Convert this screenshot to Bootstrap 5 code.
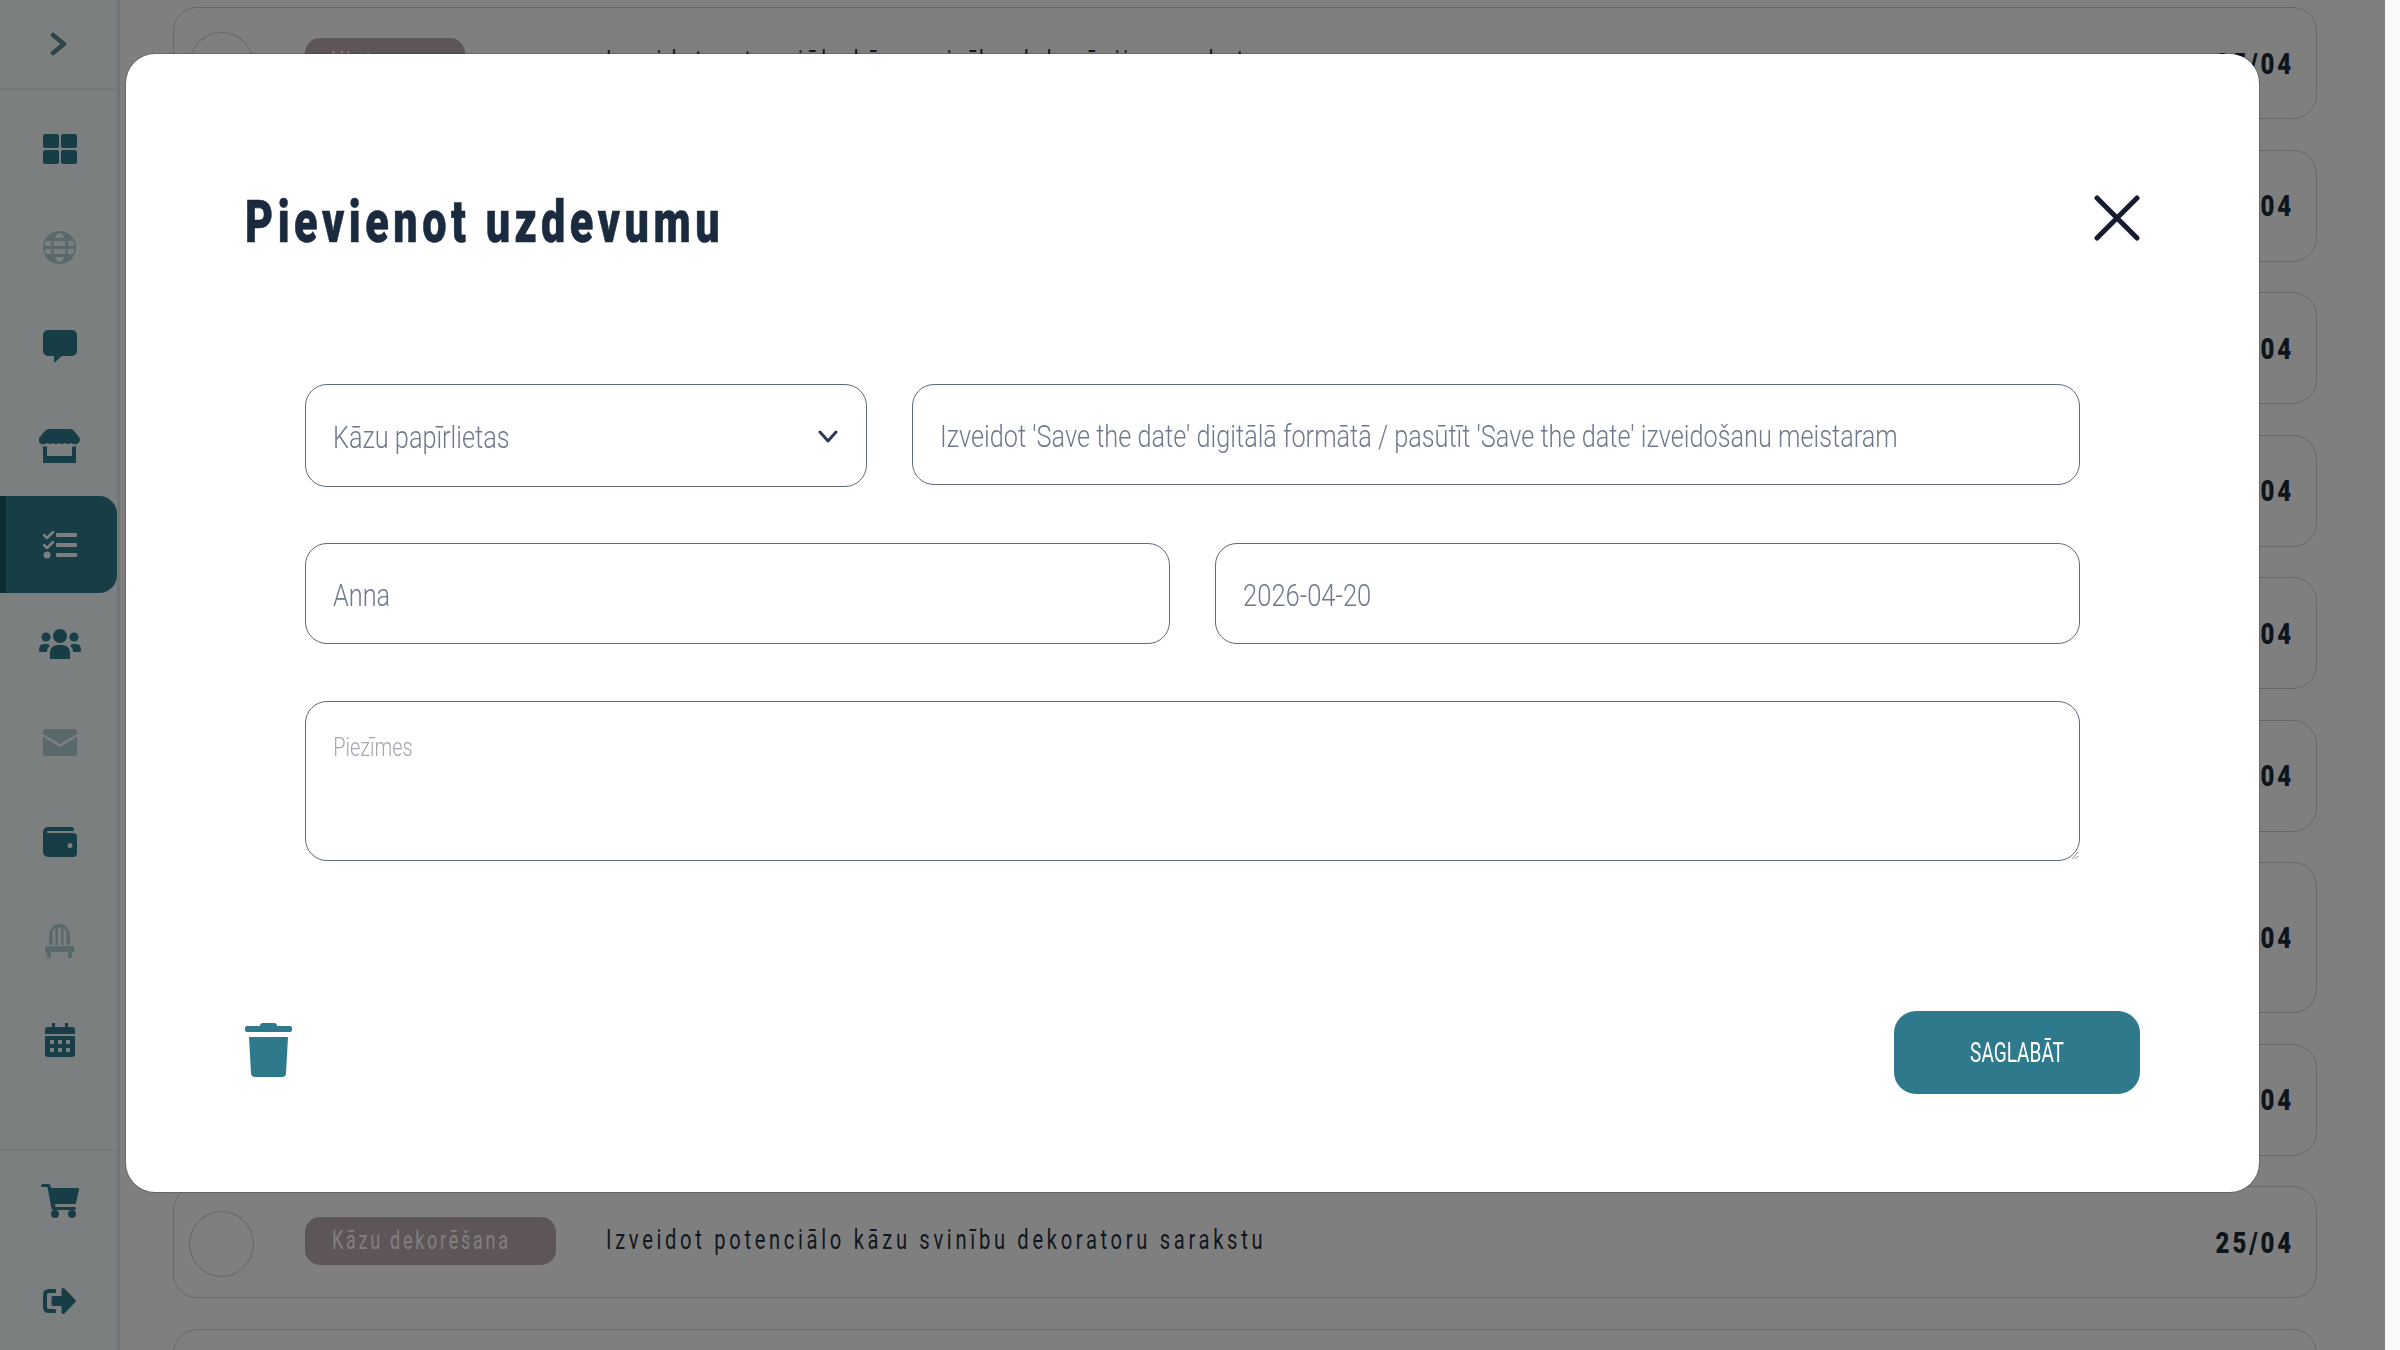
<!DOCTYPE html>
<html lang="lv">
<head>
<meta charset="utf-8">
<title>Pievienot uzdevumu</title>
<link href="https://cdn.jsdelivr.net/npm/bootstrap@5.3.0/dist/css/bootstrap.min.css" rel="stylesheet">
<style>
html,body{height:1350px;overflow:hidden;background:#fafafa}
body{font-family:Roboto,sans-serif;color:#1f3040}
.app-shell{width:2385px;height:1350px;background:#fff}
.side-rail{width:120px;background:#f7ffff;border-right:3px solid #dbeeee;height:1350px}
.rail-top{height:90px;border-bottom:2px solid #e4f2f2}
.rail-item{height:99px;color:#2e7a8c;padding-left:2px}
.rail-list{padding-top:9px}
.rail-item.faded svg{opacity:.35}
.rail-item.current{background:#2e7a8c;color:#f7ffff;border-radius:0 18px 18px 0;border-left:6px solid #1c5866;padding:0 4px 0 0;height:97px;margin:1px 0}
.rail-foot{border-top:2px solid #e4f2f2;height:201px}
.rail-foot .rail-item{height:100px}
.task-area{padding:7px 68px 0 53px;gap:30.5px}
.task-row{height:112px;border:1px solid #d0d0d0;border-radius:24px;padding:0 22px 0 15px;flex:none}
.task-row.tall{height:151px}
.tick-ring{width:65px;height:66px;border:1px solid #d0d0d0;border-radius:50%;flex:none;margin-top:3px}
.chip-slot{width:251px;margin-left:51px;flex:none;margin-top:-2px}
.cat-chip{height:48px;border-radius:15px;background:#bcaab0;color:#fff;font-size:25px;letter-spacing:3.8px;padding:0 27px;line-height:48px;width:160px;overflow:hidden;white-space:nowrap}
.cat-chip.wide{width:251px}
.squeezed{display:inline-block;transform:scaleX(.72);transform-origin:left center;white-space:nowrap}
.task-name{font-size:28px;letter-spacing:5.1px;margin-left:50px;margin-top:-5px}
.task-date{font-size:30px;font-weight:900;letter-spacing:3.6px;color:#1a2a3a;transform:scaleX(.8);transform-origin:right center;flex:none}
.scrim{position:fixed;top:0;left:0;width:2385px;height:1350px;background:#000;opacity:.5;z-index:1050}
.task-dialog{max-width:none;width:2135px;margin:53px 0 0 125px}
.task-sheet{height:1140px;border-radius:30px}
.task-head{padding:138px 119px 0;align-items:center}
.task-title{font-size:60px;line-height:60px;font-weight:900;letter-spacing:6.3px;color:#1b2b3f;-webkit-text-stroke:.6px #1b2b3f}
.close-mark{margin-top:-8px}
.task-body{padding:132px 179px 0}
.field-row{gap:45.5px;margin-bottom:56px}
.field-row.second{margin-bottom:57px;gap:45px}
.field-box{border:1px solid #5f687c;border-radius:22px;height:101px;padding:2px 27px 0;overflow:hidden}
.field-box.pick{width:561.5px;height:103px;flex:none;padding-right:28px}
.field-box input,.field-box select{border:0;padding:0;background:none;box-shadow:none;color:#6f788c;font-size:32px;font-weight:300;flex:none;transform:scaleX(.79);transform-origin:left center}
.field-box input{width:127%}
.field-box select{width:440px}
.field-box.day input{transform:scaleX(.8)}
.field-box input:focus,.field-box select:focus{background:none;color:#6f788c;box-shadow:none}
.field-box.notes{height:160px;padding:0;overflow:visible}
.field-box textarea{border:0;height:100%;width:125%;max-width:none;padding:27px 34px 0;color:#7a8296;font-size:25px;font-weight:300;background:none;box-shadow:none;transform:scaleX(.8);transform-origin:left top}
.field-box textarea::placeholder{color:#a4a6b0}
.task-foot{padding:150px 119px 97px;border:0}
.task-foot>*{margin:0}
.trash-btn{margin-bottom:5px!important}
.save-btn{width:246px;height:83px;border-radius:22px;background:#2e7a8c;border:0;color:#fff;font-size:28px;padding:0}
.save-btn span{display:inline-block;transform:scaleX(.68)}
.icon-plain{background:none;border:0;padding:0;line-height:0}
</style>
</head>
<body>
<div class="app-shell d-flex">
  <nav class="side-rail d-flex flex-column flex-shrink-0">
    <div class="rail-top d-flex align-items-center justify-content-center">
      <svg width="20" height="24" viewBox="0 0 20 24" fill="none" stroke="#5f8a94" stroke-width="4.500" stroke-linecap="round" stroke-linejoin="round"><path d="M4 3l11 9-11 9"/></svg>
    </div>
    <div class="rail-list flex-grow-1">
      <a class="rail-item d-flex align-items-center justify-content-center">
        <svg width="34" height="30" viewBox="0 0 34 30" fill="currentColor"><rect width="16" height="14" rx="2"/><rect x="18" width="16" height="14" rx="2"/><rect y="16" width="16" height="14" rx="2"/><rect x="18" y="16" width="16" height="14" rx="2"/></svg>
      </a>
      <a class="rail-item faded d-flex align-items-center justify-content-center">
        <svg width="33" height="33" viewBox="0 0 33 33" fill="currentColor"><path fill-rule="evenodd" d="M16.500 0A16.500 16.500 0 1 0 16.500 33 16.500 16.500 0 1 0 16.500 0ZM11 10h11l.5 5h-12ZM10.500 18h12l-.5 5H11ZM1.500 15q.300-2.800 1.500-5h5.500l-.5 5ZM25 10h5q1.200 2.200 1.500 5H25.500ZM3 23q-1.200-2.200-1.500-5H8l.5 5ZM25 18h6.500q-.300 2.800-1.500 5h-5.500ZM12 7q1.500-5 4.500-5T21 7ZM12 26h9q-1.500 5-4.500 5T12 26Z"/></svg>
      </a>
      <a class="rail-item d-flex align-items-center justify-content-center">
        <svg width="34" height="34" viewBox="0 0 34 34" fill="currentColor"><path d="M5 0h24a5 5 0 0 1 5 5v16a5 5 0 0 1-5 5H19l-8 7v-7H5a5 5 0 0 1-5-5V5a5 5 0 0 1 5-5z"/></svg>
      </a>
      <a class="rail-item d-flex align-items-center justify-content-center">
        <svg width="41" height="34" viewBox="0 0 41 34" fill="currentColor"><path d="M10 0h21q3 0 5 3l4 5a4.500 4.500 0 0 1-2 7q-3 1-6-1-3 2-6 0-3 2-6 0-3 2-6 0-3 2-6 0-3 2-6 1A4.500 4.500 0 0 1 1 8l4-5q2-3 5-3z"/><path fill-rule="evenodd" d="M4 17q2 .8 4 .5V27h25v-9.500q2 .3 4-.5v17H4z"/></svg>
      </a>
      <a class="rail-item current d-flex align-items-center justify-content-center">
        <svg width="34" height="28" viewBox="0 0 34 28" fill="currentColor"><rect x="13" y="2" width="21" height="4" rx="1"/><rect x="13" y="12" width="21" height="4" rx="1"/><rect x="13" y="22" width="21" height="4" rx="1"/><circle cx="4" cy="24" r="3.500"/><path d="M1 4l3 3 6-6M1 14l3 3 6-6" fill="none" stroke="currentColor" stroke-width="2.500" stroke-linecap="round" stroke-linejoin="round"/></svg>
      </a>
      <a class="rail-item d-flex align-items-center justify-content-center">
        <svg width="42" height="30" viewBox="0 0 42 30" fill="currentColor"><circle cx="21" cy="7" r="7"/><circle cx="7" cy="8" r="4.500"/><circle cx="35" cy="8" r="4.500"/><path d="M11 30v-6q0-7 7-8h6q7 1 7 8v6zM0 21q0-6 5-6h4q1 .8 2 2-3 2-3 6H1.500Q0 23 0 21zM42 21q0-6-5-6h-4q-1 .8-2 2 3 2 3 6h6.500q1.500 0 1.500-2z"/></svg>
      </a>
      <a class="rail-item faded d-flex align-items-center justify-content-center">
        <svg width="34" height="27" viewBox="0 0 34 27" fill="currentColor"><path d="M3 0h28a3 3 0 0 1 3 3v2L17 15 0 5V3a3 3 0 0 1 3-3zM0 8l17 10L34 8v16a3 3 0 0 1-3 3H3a3 3 0 0 1-3-3z"/></svg>
      </a>
      <a class="rail-item d-flex align-items-center justify-content-center">
        <svg width="34" height="30" viewBox="0 0 34 30" fill="currentColor"><path fill-rule="evenodd" d="M5 0h24q2 0 2 4H5Q4 4 4 5t1 1h25a4 4 0 0 1 4 4v16a4 4 0 0 1-4 4H5a5 5 0 0 1-5-5V5a5 5 0 0 1 5-5zM27 16a2.500 2.500 0 1 0 0 5 2.500 2.500 0 1 0 0-5z"/></svg>
      </a>
      <a class="rail-item faded d-flex align-items-center justify-content-center">
        <svg width="29" height="34" viewBox="0 0 29 34" fill="currentColor"><path fill-rule="evenodd" d="M4 21V13C4 5 9 0 14.500 0S25 5 25 13v8h-3.500V6.500Q20 5 18.500 4.300V21h-2.500V3.400h-3V21h-2.500V4.300Q9 5 7.500 6.500V21zM1.500 22h26a1.500 1.500 0 0 1 1.500 1.500V27a1 1 0 0 1-2 1v6h-4v-6H6v6H2v-6a1 1 0 0 1-2-1v-3.500A1.500 1.500 0 0 1 1.500 22z"/></svg>
      </a>
      <a class="rail-item d-flex align-items-center justify-content-center">
        <svg width="30" height="34" viewBox="0 0 30 34" fill="currentColor"><path fill-rule="evenodd" d="M7 0h3v4h10V0h3v4h4a3 3 0 0 1 3 3v4H0V7a3 3 0 0 1 3-3h4zM0 13h30v18a3 3 0 0 1-3 3H3a3 3 0 0 1-3-3zM5 17v4h4v-4zM13 17v4h4v-4zM21 17v4h4v-4zM5 25v4h4v-4zM13 25v4h4v-4zM21 25v4h4v-4z"/></svg>
      </a>
    </div>
    <div class="rail-foot">
      <a class="rail-item d-flex align-items-center justify-content-center">
        <svg width="38" height="34" viewBox="0 0 38 34" fill="currentColor"><path d="M1.500 0h6A2 2 0 0 1 9.500 1.500L10 4h26.500a1.500 1.500 0 0 1 1.500 1.800l-3 13a1.500 1.500 0 0 1-1.500 1.200H14l.5 3h19a1.500 1.500 0 0 1 0 3H12a1.500 1.500 0 0 1-1.500-1.200L6.500 3H1.500a1.500 1.500 0 0 1 0-3z"/><circle cx="14" cy="30" r="4"/><circle cx="31" cy="30" r="4"/></svg>
      </a>
      <a class="rail-item d-flex align-items-center justify-content-center">
        <svg width="33" height="26" viewBox="0 0 33 26" fill="currentColor"><path d="M6 1h6a1 1 0 0 1 1 1v2a1 1 0 0 1-1 1H6Q4 5 4 7v12q0 2 2 2h6a1 1 0 0 1 1 1v2a1 1 0 0 1-1 1H6q-6 0-6-6V7q0-6 6-6z"/><path d="M20 0q1 0 2 1l10.500 11a1.500 1.500 0 0 1 0 2L22 25q-1 1-2 1-1.500-.2-1.500-2v-6H10a1.500 1.500 0 0 1-1.500-1.500v-7A1.500 1.500 0 0 1 10 8h8.500V2q0-1.800 1.500-2z"/></svg>
      </a>
    </div>
  </nav>
  <main class="task-area flex-grow-1 d-flex flex-column overflow-hidden">
    <div class="task-row d-flex align-items-center"><span class="tick-ring"></span><div class="chip-slot"><div class="cat-chip"><span class="squeezed">Vieta</span></div></div><span class="task-name flex-grow-1"><span class="squeezed">Izveidot potenciālo kāzu svinību dekorāciju sarakstu</span></span><span class="task-date">25/04</span></div>
    <div class="task-row d-flex align-items-center"><span class="tick-ring"></span><div class="chip-slot"><div class="cat-chip"><span class="squeezed">Vieta</span></div></div><span class="task-name flex-grow-1"><span class="squeezed">Apmeklēt potenciālās vietas</span></span><span class="task-date">25/04</span></div>
    <div class="task-row d-flex align-items-center"><span class="tick-ring"></span><div class="chip-slot"><div class="cat-chip"><span class="squeezed">Vieta</span></div></div><span class="task-name flex-grow-1"><span class="squeezed">Rezervēt kāzu vietu</span></span><span class="task-date">25/04</span></div>
    <div class="task-row d-flex align-items-center"><span class="tick-ring"></span><div class="chip-slot"><div class="cat-chip"><span class="squeezed">Ēdiens</span></div></div><span class="task-name flex-grow-1"><span class="squeezed">Izvēlēties ēdināšanas pakalpojumu</span></span><span class="task-date">25/04</span></div>
    <div class="task-row d-flex align-items-center"><span class="tick-ring"></span><div class="chip-slot"><div class="cat-chip"><span class="squeezed">Ēdiens</span></div></div><span class="task-name flex-grow-1"><span class="squeezed">Saskaņot ēdienkarti</span></span><span class="task-date">25/04</span></div>
    <div class="task-row d-flex align-items-center"><span class="tick-ring"></span><div class="chip-slot"><div class="cat-chip"><span class="squeezed">Foto</span></div></div><span class="task-name flex-grow-1"><span class="squeezed">Izvēlēties fotogrāfu</span></span><span class="task-date">25/04</span></div>
    <div class="task-row tall d-flex align-items-center"><span class="tick-ring"></span><div class="chip-slot"><div class="cat-chip wide"><span class="squeezed">Kāzu papīrlietas</span></div></div><span class="task-name flex-grow-1"><span class="squeezed">Izveidot 'Save the date' digitālā formātā</span></span><span class="task-date">25/04</span></div>
    <div class="task-row d-flex align-items-center"><span class="tick-ring"></span><div class="chip-slot"><div class="cat-chip"><span class="squeezed">Mūzika</span></div></div><span class="task-name flex-grow-1"><span class="squeezed">Izvēlēties mūziķus</span></span><span class="task-date">25/04</span></div>
    <div class="task-row d-flex align-items-center"><span class="tick-ring"></span><div class="chip-slot"><div class="cat-chip wide"><span class="squeezed">Kāzu dekorēšana</span></div></div><span class="task-name flex-grow-1"><span class="squeezed">Izveidot potenciālo kāzu svinību dekoratoru sarakstu</span></span><span class="task-date">25/04</span></div>
    <div class="task-row d-flex align-items-center"><span class="tick-ring"></span></div>
  </main>
</div>
<div class="scrim"></div>
<div class="modal d-block" tabindex="-1">
  <div class="modal-dialog task-dialog">
    <div class="modal-content task-sheet">
      <div class="modal-header task-head border-0">
        <h1 class="modal-title task-title m-0"><span class="squeezed">Pievienot uzdevumu</span></h1>
        <button type="button" class="icon-plain close-mark ms-auto" aria-label="Aizvērt">
          <svg width="46" height="46" viewBox="0 0 46 46" fill="none" stroke="#171c30" stroke-width="5" stroke-linecap="round"><path d="M3 3l40 40M43 3L3 43"/></svg>
        </button>
      </div>
      <div class="modal-body task-body flex-grow-0">
        <div class="d-flex field-row align-items-start">
          <div class="field-box pick d-flex align-items-center justify-content-between">
            <select class="form-select"><option>Kāzu papīrlietas</option></select>
            <svg width="20" height="13" viewBox="0 0 20 13" fill="none" stroke="#2b3a5a" stroke-width="3" stroke-linecap="round" stroke-linejoin="round"><path d="M2 2l8 9 8-9"/></svg>
          </div>
          <div class="field-box flex-grow-1 d-flex align-items-center">
            <input class="form-control" value="Izveidot 'Save the date' digitālā formātā / pasūtīt 'Save the date' izveidošanu meistaram">
          </div>
        </div>
        <div class="d-flex field-row second">
          <div class="field-box w-50 d-flex align-items-center"><input class="form-control" value="Anna"></div>
          <div class="field-box day w-50 d-flex align-items-center"><input class="form-control" value="2026-04-20"></div>
        </div>
        <div class="field-box notes"><textarea class="form-control" placeholder="Piezīmes"></textarea></div>
      </div>
      <div class="modal-footer task-foot justify-content-between align-items-center">
        <button type="button" class="icon-plain trash-btn" aria-label="Dzēst">
          <svg width="47" height="54" viewBox="0 0 47 54" fill="#2e7a8c"><path d="M15 3q0-3 3-3h11q3 0 3 3h13a2 2 0 0 1 2 2v2a2 2 0 0 1-2 2H2a2 2 0 0 1-2-2V5a2 2 0 0 1 2-2z"/><path d="M4 14h39l-2 36a4 4 0 0 1-4 4H10a4 4 0 0 1-4-4z"/></svg>
        </button>
        <button type="button" class="btn save-btn"><span>SAGLABĀT</span></button>
      </div>
    </div>
  </div>
</div>
<script src="https://cdn.jsdelivr.net/npm/bootstrap@5.3.0/dist/js/bootstrap.bundle.min.js"></script>
</body>
</html>
